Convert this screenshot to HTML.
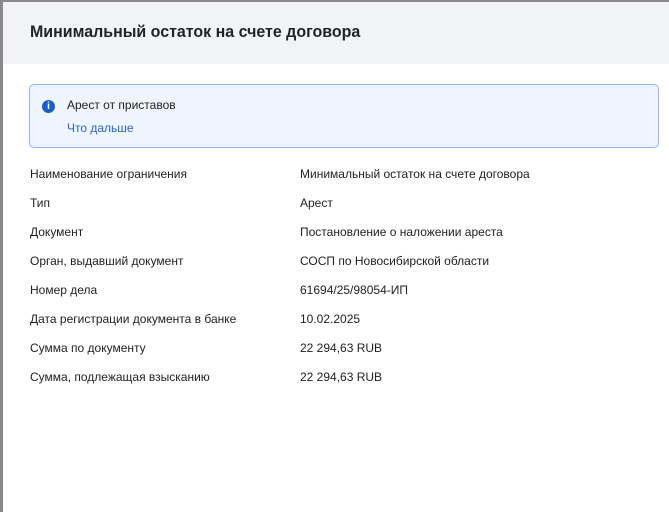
<!DOCTYPE html>
<html><head><meta charset="utf-8"><style>
body{margin:0;width:669px;height:512px;overflow:hidden;background:#8a8a8a;font-family:"Liberation Sans",sans-serif;}
.m{position:absolute;left:3px;top:2px;width:666px;height:510px;background:#fff;}
.h{position:absolute;left:0;top:0;width:666px;height:62px;background:#f2f3f6;}
.h div{position:absolute;left:27px;top:20px;font-size:17px;font-weight:bold;color:#1f2229;transform:scaleX(0.94);transform-origin:0 0;white-space:nowrap;}
.box{position:absolute;left:26px;top:82px;width:628px;height:62px;border:1px solid #8fb4ea;border-radius:5px;background:#eff5fe;}
.ic{position:absolute;left:12px;top:15px;width:13px;height:13px;border-radius:50%;background:#1d5fc4;color:#fff;font-size:10px;font-weight:bold;text-align:center;line-height:13px;}
.t1{position:absolute;left:37px;top:13px;font-size:12px;color:#222;}
.t2{position:absolute;left:37px;top:36px;font-size:12px;color:#2366c9;}
.r{position:absolute;left:27px;font-size:12px;color:#222;}
.v{position:absolute;left:297px;font-size:12px;color:#222;}
</style></head><body>
<div class="m">
<div class="h"><div>Минимальный остаток на счете договора</div></div>
<div class="box"><div class="ic">i</div><div class="t1">Арест от приставов</div><div class="t2">Что дальше</div></div>
<div class="r" style="top:165px">Наименование ограничения</div><div class="v" style="top:165px">Минимальный остаток на счете договора</div>
<div class="r" style="top:194px">Тип</div><div class="v" style="top:194px">Арест</div>
<div class="r" style="top:223px">Документ</div><div class="v" style="top:223px">Постановление о наложении ареста</div>
<div class="r" style="top:252px">Орган, выдавший документ</div><div class="v" style="top:252px">СОСП по Новосибирской области</div>
<div class="r" style="top:281px">Номер дела</div><div class="v" style="top:281px">61694/25/98054-ИП</div>
<div class="r" style="top:310px">Дата регистрации документа в банке</div><div class="v" style="top:310px">10.02.2025</div>
<div class="r" style="top:339px">Сумма по документу</div><div class="v" style="top:339px">22 294,63 RUB</div>
<div class="r" style="top:368px">Сумма, подлежащая взысканию</div><div class="v" style="top:368px">22 294,63 RUB</div>
</div>
</body></html>
